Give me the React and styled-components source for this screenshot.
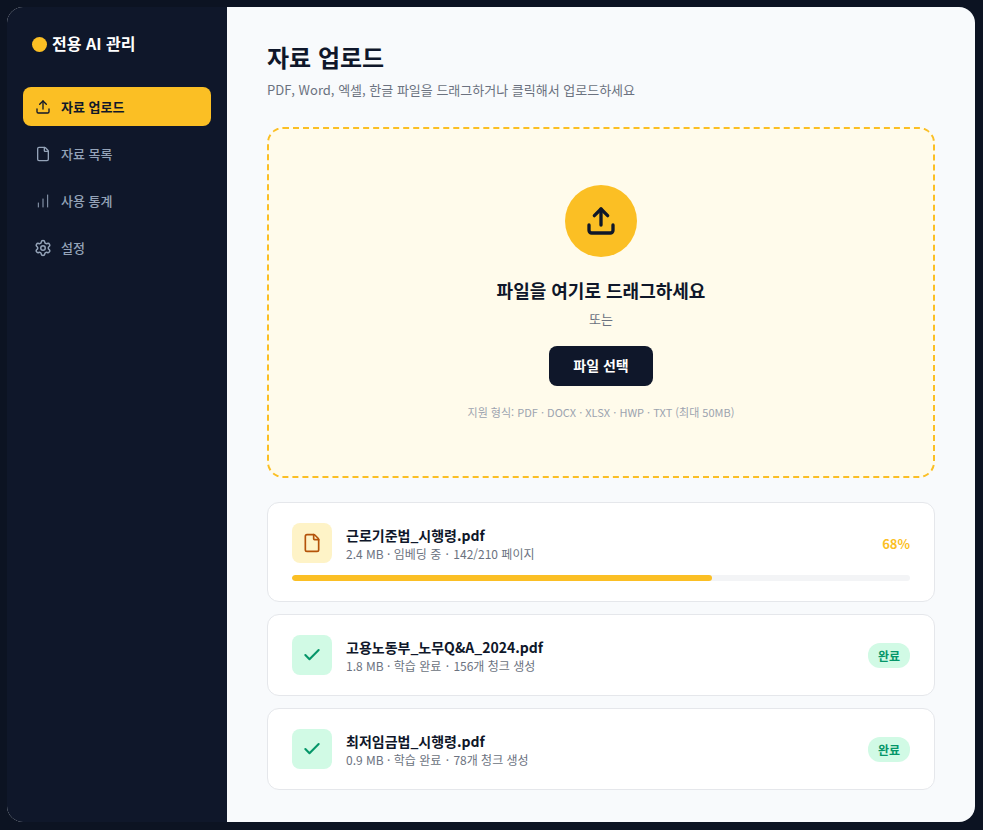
import { createGlobalStyle } from 'styled-components';
import styled from 'styled-components';
import { Upload, File, ChartNoAxesColumnIncreasing, Settings, Check } from 'lucide-react';

const GlobalStyle = createGlobalStyle`
    html, body {
        margin: 0;
        padding: 0;
        background: #0c1322;
    }
    * {
        box-sizing: border-box;
    }
    body {
        font-family: "Noto Sans CJK KR", "Noto Sans", sans-serif;
    }
`;

const navItems = [
    { label: '자료 업로드', icon: Upload, size: 16, stroke: 2, active: true },
    { label: '자료 목록', icon: File, size: 16, stroke: 2 },
    { label: '사용 통계', icon: ChartNoAxesColumnIncreasing, size: 16, stroke: 1.5 },
    { label: '설정', icon: Settings, size: 18, stroke: 2 },
];

const files = [
    { name: '고용노동부_노무Q&A_2024.pdf', size: '1.8 MB', state: '학습 완료', detail: '156개 청크 생성' },
    { name: '최저임금법_시행령.pdf', size: '0.9 MB', state: '학습 완료', detail: '78개 청크 생성' },
];

export default function App() {
    return (
        <>
            <GlobalStyle />
            <Frame lang="ko">
                <Sidebar>
                    <Logo>
                        <LogoDot />
                        <LogoText>전용 AI 관리</LogoText>
                    </Logo>
                    <Nav>
                        {navItems.map(({ label, icon: Icon, size, stroke, active }) => (
                            <NavItem key={label} $active={active}>
                                <NavIconSlot>
                                    <Icon size={size} strokeWidth={stroke} />
                                </NavIconSlot>
                                {label}
                            </NavItem>
                        ))}
                    </Nav>
                </Sidebar>
                <Main>
                    <Title>자료 업로드</Title>
                    <Subtitle>PDF, Word, 엑셀, 한글 파일을 드래그하거나 클릭해서 업로드하세요</Subtitle>

                    <DropZone>
                        <UploadCircle>
                            <Upload size={32} strokeWidth={2.5} />
                        </UploadCircle>
                        <DropTitle>파일을 여기로 드래그하세요</DropTitle>
                        <DropOr>또는</DropOr>
                        <SelectButton>파일 선택</SelectButton>
                        <DropHint>지원 형식: PDF · DOCX · XLSX · HWP · TXT (최대 50MB)</DropHint>
                    </DropZone>

                    <FileList>
                        <FileCard>
                            <FileRow>
                                <FileIcon $pending>
                                    <File size={20} strokeWidth={2} />
                                </FileIcon>
                                <FileInfo>
                                    <FileName>근로기준법_시행령.pdf</FileName>
                                    <FileMeta>2.4 MB · 임베딩 중 <MetaDot>·</MetaDot> 142/210 페이지</FileMeta>
                                </FileInfo>
                                <Percent>68%</Percent>
                            </FileRow>
                            <ProgressTrack>
                                <ProgressFill style={{ width: '68%' }} />
                            </ProgressTrack>
                        </FileCard>

                        {files.map((file) => (
                            <FileCard key={file.name}>
                                <FileRow>
                                    <FileIcon>
                                        <Check size={20} strokeWidth={2.5} />
                                    </FileIcon>
                                    <FileInfo>
                                        <FileName>{file.name}</FileName>
                                        <FileMeta>{file.size} · {file.state} <MetaDot>·</MetaDot> {file.detail}</FileMeta>
                                    </FileInfo>
                                    <DoneBadge>완료</DoneBadge>
                                </FileRow>
                            </FileCard>
                        ))}
                    </FileList>
                </Main>
            </Frame>
        </>
    );
}

const Frame = styled.div`
    display: flex;
    width: 968px;
    height: 815px;
    margin: 7px 0 0 7px;
    border-radius: 16px;
    overflow: hidden;
    background: #f8fafc;
`;

const Sidebar = styled.aside`
    flex: 0 0 220px;
    background: #0f172a;
    padding: 24px 16px;
`;

const Logo = styled.div`
    display: flex;
    align-items: center;
    gap: 5px;
    height: 26px;
    margin-left: 9px;
    color: #ffffff;
    font-size: 16px;
    font-weight: 700;
`;

const LogoDot = styled.span`
    width: 15px;
    height: 15px;
    border-radius: 50%;
    background: #fbbf24;
`;

const LogoText = styled.span`
    margin-bottom: 2px;
`;

const Nav = styled.nav`
    display: flex;
    flex-direction: column;
    gap: 8px;
    margin-top: 30px;
`;

const NavItem = styled.div`
    display: flex;
    align-items: center;
    gap: 10px;
    height: 39px;
    padding: 0 12px;
    border-radius: 8px;
    font-size: 13px;
    font-weight: ${(props) => (props.$active ? 700 : 500)};
    color: ${(props) => (props.$active ? '#0f172a' : '#94a3b8')};
    background: ${(props) => (props.$active ? '#fbbf24' : 'transparent')};
`;

const NavIconSlot = styled.span`
    display: flex;
    align-items: center;
    justify-content: center;
    width: 16px;

    svg {
        flex-shrink: 0;
    }
`;

const Main = styled.main`
    flex: 1;
    min-width: 0;
    padding: 32px 40px;
`;

const Title = styled.h1`
    margin: 0;
    font-size: 24px;
    line-height: 36px;
    font-weight: 700;
    color: #0f172a;
`;

const Subtitle = styled.p`
    margin: 4px 0 0;
    font-size: 13px;
    line-height: 22px;
    color: #6b7280;
`;

const DropZone = styled.section`
    display: flex;
    flex-direction: column;
    align-items: center;
    height: 351px;
    margin-top: 26px;
    padding-top: 56px;
    border: 2px dashed #fbbf24;
    border-radius: 16px;
    background: #fffbeb;
`;

const UploadCircle = styled.div`
    display: flex;
    align-items: center;
    justify-content: center;
    width: 72px;
    height: 72px;
    border-radius: 50%;
    background: #fbbf24;
    color: #0f172a;
`;

const DropTitle = styled.h2`
    margin: 20px 0 0;
    font-size: 18px;
    line-height: 26px;
    font-weight: 700;
    color: #0f172a;
`;

const DropOr = styled.p`
    margin: 7px 0 0;
    font-size: 13px;
    line-height: 18px;
    color: #6b7280;
`;

const SelectButton = styled.button`
    width: 104px;
    height: 40px;
    margin-top: 18px;
    padding: 0 0 2px;
    border: none;
    border-radius: 8px;
    background: #0f172a;
    color: #ffffff;
    font-family: inherit;
    font-size: 14px;
    font-weight: 700;
`;

const DropHint = styled.p`
    margin: 18px 0 0;
    font-size: 11px;
    line-height: 16px;
    color: #9ca3af;
`;

const FileList = styled.div`
    display: flex;
    flex-direction: column;
    gap: 12px;
    margin-top: 24px;
`;

const FileCard = styled.div`
    padding: 20px 24px;
    border: 1px solid #e5e7eb;
    border-radius: 12px;
    background: #ffffff;
`;

const FileRow = styled.div`
    display: flex;
    align-items: center;
    gap: 14px;
`;

const FileIcon = styled.div`
    display: flex;
    align-items: center;
    justify-content: center;
    flex: 0 0 40px;
    height: 40px;
    border-radius: 8px;
    background: ${(props) => (props.$pending ? '#fef3c7' : '#d1fae5')};
    color: ${(props) => (props.$pending ? '#b45309' : '#059669')};
`;

const FileInfo = styled.div`
    flex: 1;
    min-width: 0;
    padding-top: 2px;
`;

const FileName = styled.div`
    font-size: 14px;
    line-height: 20px;
    font-weight: 600;
    color: #0f172a;
`;

const FileMeta = styled.div`
    font-size: 12px;
    line-height: 18px;
    color: #6b7280;
`;

const MetaDot = styled.span`
    margin: 0 1px;
`;

const Percent = styled.span`
    font-size: 13px;
    font-weight: 700;
    color: #fbbf24;
`;

const DoneBadge = styled.span`
    padding: 3px 10px;
    border-radius: 12px;
    background: #d1fae5;
    color: #059669;
    font-size: 12px;
    line-height: 19px;
    font-weight: 700;
`;

const ProgressTrack = styled.div`
    height: 6px;
    margin-top: 12px;
    border-radius: 3px;
    background: #f3f4f6;
    overflow: hidden;
`;

const ProgressFill = styled.div`
    height: 100%;
    border-radius: 3px;
    background: #fbbf24;
`;
